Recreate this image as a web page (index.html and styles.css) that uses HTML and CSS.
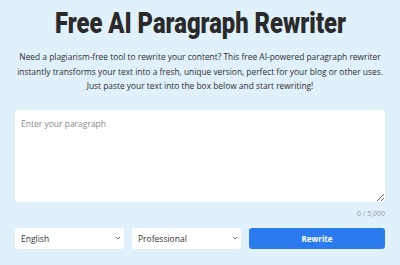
FILE: index.html
```html
<!DOCTYPE html>
<html>
<head>
<meta charset="utf-8">
<link rel="stylesheet" href="styles.css">
</head>
<body>
<main class="page">
  <h1 class="title"><span class="title-text">Free AI Paragraph Rewriter</span></h1>
  <p class="intro">Need a plagiarism-free tool to rewrite your content? This free AI-powered paragraph rewriter<br>instantly transforms your text into a fresh, unique version, perfect for your blog or other uses.<br>Just paste your text into the box below and start rewriting!</p>
  <textarea class="input" placeholder="Enter your paragraph"></textarea>
  <div class="counter">0 / 5,000</div>
  <div class="controls">
    <select class="select"><option>English</option></select>
    <select class="select"><option>Professional</option></select>
    <button class="btn">Rewrite</button>
  </div>
</main>
</body>
</html>
```
FILE: styles.css
```css
html, body {
  margin: 0;
  padding: 0;
  background: #e0f1fc;
}
.page {
  width: 370px;
  margin: 0 auto;
  padding-top: 6px;
  font-family: "Open Sans", "Noto Sans", sans-serif;
}
.title {
  margin: 0;
  text-align: center;
  font-family: Roboto, "Liberation Sans", sans-serif;
  font-weight: 900;
  font-size: 29px;
  line-height: 34px;
  color: #2a2a2a;
  white-space: nowrap;
}
.title-text {
  display: inline-block;
  transform: scaleX(0.82);
}
.intro {
  margin: 10px -10px 0;
  text-align: center;
  font-size: 8.4px;
  line-height: 14.5px;
  color: #2d2d2d;
  white-space: nowrap;
}
.input {
  display: block;
  box-sizing: border-box;
  width: 100%;
  height: 92px;
  margin-top: 16px;
  padding: 8px 6px;
  border: none;
  border-radius: 3px;
  background: #fff;
  font-family: "Open Sans", sans-serif;
  font-size: 8.5px;
  resize: vertical;
}
.input::placeholder {
  color: #8a8a8a;
}
.counter {
  text-align: right;
  font-size: 7px;
  color: #9a9a9a;
  margin-top: 7px;
  line-height: 10px;
}
.controls {
  display: grid;
  grid-template-columns: 109px 109px 1fr;
  gap: 8px;
  margin-top: 9px;
}
.select {
  -webkit-appearance: none;
  appearance: none;
  height: 21px;
  border: none;
  border-radius: 3px;
  background: #fff url("data:image/svg+xml;utf8,<svg xmlns='http://www.w3.org/2000/svg' width='6' height='4' viewBox='0 0 6 4'><path d='M1 1 L3 3 L5 1' fill='none' stroke='%23777' stroke-width='1'/></svg>") no-repeat right 3px center;
  font-family: "Open Sans", sans-serif;
  font-size: 8.5px;
  color: #333;
  padding: 0 6px;
}
.btn {
  height: 21px;
  border: none;
  border-radius: 3px;
  background: #2b7bef;
  color: #fff;
  font-family: "Open Sans", sans-serif;
  font-weight: 700;
  font-size: 8px;
}
```
